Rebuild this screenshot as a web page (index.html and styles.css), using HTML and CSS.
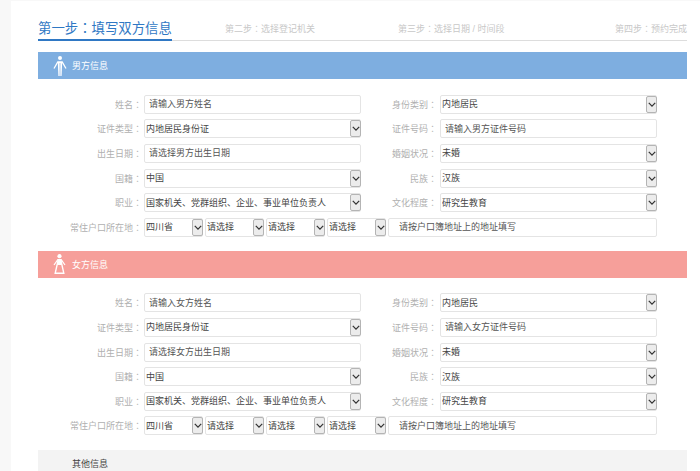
FILE: index.html
```html
<!DOCTYPE html>
<html>
<head>
    <meta charset="UTF-8">
    <title>填写双方信息</title>
    <link rel="stylesheet" href="styles.css">
</head>
<body>

<div class="panel">
    <div class="steps">
        <div class="step step-active">第一步<span class="colon">：</span>填写双方信息</div>
        <div class="step step-two">第二步<span class="colon">：</span>选择登记机关</div>
        <div class="step step-three">第三步<span class="colon">：</span>选择日期 / 时间段</div>
        <div class="step step-four">第四步<span class="colon">：</span>预约完成</div>
    </div>

    <div class="section-bar bar-male">
        <svg class="bar-icon" viewBox="0 0 14 20" width="14" height="20">
            <circle cx="7" cy="2" r="2" fill="#fff"/>
            <path d="M1 12.5 L4.8 6 H9.2 L13 12.5" fill="none" stroke="#fff" stroke-width="1.3"/>
            <path d="M4.8 6 L5.4 20 H8.6 L9.2 6 Z" fill="#fff"/>
            <path d="M7 7 V20" stroke="#7eaee0" stroke-width="0.7"/>
        </svg>
        <span>男方信息</span>
    </div>

    <div class="form">
        <div class="row">
            <label>姓名<span class="colon">：</span></label>
            <input class="field" type="text" placeholder="请输入男方姓名">
            <label>身份类别<span class="colon">：</span></label>
            <div class="pick"><select><option>内地居民</option></select><i class="arrow"><svg viewBox="0 0 10 6" width="8" height="5"><path d="M1 1 L5 5 L9 1" fill="none" stroke="#333" stroke-width="1.6"/></svg></i></div>
        </div>
        <div class="row">
            <label>证件类型<span class="colon">：</span></label>
            <div class="pick"><select><option>内地居民身份证</option></select><i class="arrow"><svg viewBox="0 0 10 6" width="8" height="5"><path d="M1 1 L5 5 L9 1" fill="none" stroke="#333" stroke-width="1.6"/></svg></i></div>
            <label>证件号码<span class="colon">：</span></label>
            <input class="field" type="text" placeholder="请输入男方证件号码">
        </div>
        <div class="row">
            <label>出生日期<span class="colon">：</span></label>
            <input class="field" type="text" placeholder="请选择男方出生日期">
            <label>婚姻状况<span class="colon">：</span></label>
            <div class="pick"><select><option>未婚</option></select><i class="arrow"><svg viewBox="0 0 10 6" width="8" height="5"><path d="M1 1 L5 5 L9 1" fill="none" stroke="#333" stroke-width="1.6"/></svg></i></div>
        </div>
        <div class="row">
            <label>国籍<span class="colon">：</span></label>
            <div class="pick"><select><option>中国</option></select><i class="arrow"><svg viewBox="0 0 10 6" width="8" height="5"><path d="M1 1 L5 5 L9 1" fill="none" stroke="#333" stroke-width="1.6"/></svg></i></div>
            <label>民族<span class="colon">：</span></label>
            <div class="pick"><select><option>汉族</option></select><i class="arrow"><svg viewBox="0 0 10 6" width="8" height="5"><path d="M1 1 L5 5 L9 1" fill="none" stroke="#333" stroke-width="1.6"/></svg></i></div>
        </div>
        <div class="row">
            <label>职业<span class="colon">：</span></label>
            <div class="pick"><select><option>国家机关、党群组织、企业、事业单位负责人</option></select><i class="arrow"><svg viewBox="0 0 10 6" width="8" height="5"><path d="M1 1 L5 5 L9 1" fill="none" stroke="#333" stroke-width="1.6"/></svg></i></div>
            <label>文化程度<span class="colon">：</span></label>
            <div class="pick"><select><option>研究生教育</option></select><i class="arrow"><svg viewBox="0 0 10 6" width="8" height="5"><path d="M1 1 L5 5 L9 1" fill="none" stroke="#333" stroke-width="1.6"/></svg></i></div>
        </div>
        <div class="row row-address">
            <label>常住户口所在地<span class="colon">：</span></label>
            <div class="address">
                <div class="pick"><select><option>四川省</option></select><i class="arrow"><svg viewBox="0 0 10 6" width="8" height="5"><path d="M1 1 L5 5 L9 1" fill="none" stroke="#333" stroke-width="1.6"/></svg></i></div>
                <div class="pick"><select><option>请选择</option></select><i class="arrow"><svg viewBox="0 0 10 6" width="8" height="5"><path d="M1 1 L5 5 L9 1" fill="none" stroke="#333" stroke-width="1.6"/></svg></i></div>
                <div class="pick"><select><option>请选择</option></select><i class="arrow"><svg viewBox="0 0 10 6" width="8" height="5"><path d="M1 1 L5 5 L9 1" fill="none" stroke="#333" stroke-width="1.6"/></svg></i></div>
                <div class="pick"><select><option>请选择</option></select><i class="arrow"><svg viewBox="0 0 10 6" width="8" height="5"><path d="M1 1 L5 5 L9 1" fill="none" stroke="#333" stroke-width="1.6"/></svg></i></div>
                <input class="field field-address" type="text" placeholder="请按户口簿地址上的地址填写">
            </div>
        </div>
    </div>

    <div class="section-bar bar-female">
        <svg class="bar-icon" viewBox="0 0 14 20" width="14" height="20">
            <circle cx="6.5" cy="2.2" r="2.1" fill="#fff"/>
            <path d="M1 11 L4.8 5.6 H8.2 L12 11" fill="none" stroke="#fff" stroke-width="1.2"/>
            <path d="M5.2 6 L2.2 19.2 H10.8 L7.8 6" fill="none" stroke="#fff" stroke-width="1.4"/>
            <path d="M4.8 6 H8.2 L8.6 11 H4.4 Z" fill="#fff"/>
        </svg>
        <span>女方信息</span>
    </div>

    <div class="form">
        <div class="row">
            <label>姓名<span class="colon">：</span></label>
            <input class="field" type="text" placeholder="请输入女方姓名">
            <label>身份类别<span class="colon">：</span></label>
            <div class="pick"><select><option>内地居民</option></select><i class="arrow"><svg viewBox="0 0 10 6" width="8" height="5"><path d="M1 1 L5 5 L9 1" fill="none" stroke="#333" stroke-width="1.6"/></svg></i></div>
        </div>
        <div class="row">
            <label>证件类型<span class="colon">：</span></label>
            <div class="pick"><select><option>内地居民身份证</option></select><i class="arrow"><svg viewBox="0 0 10 6" width="8" height="5"><path d="M1 1 L5 5 L9 1" fill="none" stroke="#333" stroke-width="1.6"/></svg></i></div>
            <label>证件号码<span class="colon">：</span></label>
            <input class="field" type="text" placeholder="请输入女方证件号码">
        </div>
        <div class="row">
            <label>出生日期<span class="colon">：</span></label>
            <input class="field" type="text" placeholder="请选择女方出生日期">
            <label>婚姻状况<span class="colon">：</span></label>
            <div class="pick"><select><option>未婚</option></select><i class="arrow"><svg viewBox="0 0 10 6" width="8" height="5"><path d="M1 1 L5 5 L9 1" fill="none" stroke="#333" stroke-width="1.6"/></svg></i></div>
        </div>
        <div class="row">
            <label>国籍<span class="colon">：</span></label>
            <div class="pick"><select><option>中国</option></select><i class="arrow"><svg viewBox="0 0 10 6" width="8" height="5"><path d="M1 1 L5 5 L9 1" fill="none" stroke="#333" stroke-width="1.6"/></svg></i></div>
            <label>民族<span class="colon">：</span></label>
            <div class="pick"><select><option>汉族</option></select><i class="arrow"><svg viewBox="0 0 10 6" width="8" height="5"><path d="M1 1 L5 5 L9 1" fill="none" stroke="#333" stroke-width="1.6"/></svg></i></div>
        </div>
        <div class="row">
            <label>职业<span class="colon">：</span></label>
            <div class="pick"><select><option>国家机关、党群组织、企业、事业单位负责人</option></select><i class="arrow"><svg viewBox="0 0 10 6" width="8" height="5"><path d="M1 1 L5 5 L9 1" fill="none" stroke="#333" stroke-width="1.6"/></svg></i></div>
            <label>文化程度<span class="colon">：</span></label>
            <div class="pick"><select><option>研究生教育</option></select><i class="arrow"><svg viewBox="0 0 10 6" width="8" height="5"><path d="M1 1 L5 5 L9 1" fill="none" stroke="#333" stroke-width="1.6"/></svg></i></div>
        </div>
        <div class="row row-address">
            <label>常住户口所在地<span class="colon">：</span></label>
            <div class="address">
                <div class="pick"><select><option>四川省</option></select><i class="arrow"><svg viewBox="0 0 10 6" width="8" height="5"><path d="M1 1 L5 5 L9 1" fill="none" stroke="#333" stroke-width="1.6"/></svg></i></div>
                <div class="pick"><select><option>请选择</option></select><i class="arrow"><svg viewBox="0 0 10 6" width="8" height="5"><path d="M1 1 L5 5 L9 1" fill="none" stroke="#333" stroke-width="1.6"/></svg></i></div>
                <div class="pick"><select><option>请选择</option></select><i class="arrow"><svg viewBox="0 0 10 6" width="8" height="5"><path d="M1 1 L5 5 L9 1" fill="none" stroke="#333" stroke-width="1.6"/></svg></i></div>
                <div class="pick"><select><option>请选择</option></select><i class="arrow"><svg viewBox="0 0 10 6" width="8" height="5"><path d="M1 1 L5 5 L9 1" fill="none" stroke="#333" stroke-width="1.6"/></svg></i></div>
                <input class="field field-address" type="text" placeholder="请按户口簿地址上的地址填写">
            </div>
        </div>
    </div>

    <div class="section-bar bar-other">
        <span>其他信息</span>
    </div>
</div>

</body>
</html>
```
FILE: styles.css
```css
html, body {
    height: 100%;
    overflow: hidden;
}

body {
    margin: 0;
    background-color: #f8f8f8;
    font-family: "Liberation Sans", "Noto Sans CJK SC", sans-serif;
    font-size: 9px;
    color: #444;
}

/* TC draws the full-width colon centred, as in the original */
.colon {
    font-family: "Noto Sans CJK TC", sans-serif;
}

.panel {
    margin: 1px 0 0 11px;
    padding: 0 13px 0 27px;
    height: 470px;
    background-color: white;
    overflow: hidden;
}

.steps {
    display: flex;
    align-items: flex-end;
    height: 39px;
    border-bottom: 1px solid #ddd;
}

.step {
    color: #c8c8c8;
    font-size: 9px;
    line-height: 12px;
    padding-bottom: 5px;
    white-space: nowrap;
}

.step-active {
    color: #2f78c4;
    font-size: 13.4px;
    line-height: 18px;
    padding-bottom: 1px;
    border-bottom: 2px solid #2f78c4;
    margin-bottom: -1px;
}

.step-two {
    margin-left: 53px;
}

.step-three {
    margin-left: 83px;
}

.step-four {
    margin-left: auto;
}

.section-bar {
    display: flex;
    align-items: center;
    height: 27px;
    padding-left: 15px;
    color: white;
}

.bar-male {
    margin-top: 11px;
    background-color: #7eaee0;
}

.bar-female {
    margin-top: 13.5px;
    background-color: #f69f9a;
}

.bar-other {
    margin-top: 14.5px;
    padding-left: 34px;
    height: 40px;
    align-items: flex-start;
    line-height: 28px;
    background-color: #f3f3f3;
    color: #444;
}

.bar-icon {
    margin-right: 5px;
}

.form {
    padding-top: 15.5px;
    display: flex;
    flex-direction: column;
    gap: 5px;
}

.row {
    display: grid;
    grid-template-columns: 104px 219px 76px 220px;
    height: 19.6px;
    align-items: center;
}

.row label {
    text-align: right;
    color: #b0b0b0;
    white-space: nowrap;
}

.row > .pick,
.row > .field {
    margin-left: 2px;
    width: 217px;
}

.row > .pick:last-child,
.row > .field:last-child {
    margin-left: 3px;
}

.row-address {
    grid-template-columns: 104px 1fr;
}

.address {
    display: flex;
    gap: 2px;
    margin-left: 2px;
    width: 513px;
}

.pick {
    position: relative;
    height: 19px;
}

.address .pick {
    flex: 0 0 59px;
}

.pick select {
    display: block;
    width: 100%;
    height: 19px;
    padding: 0 0 0 1px;
    border: 1px solid #e4e4e4;
    border-radius: 2px;
    background-color: white;
    font: inherit;
    color: #444;
    appearance: none;
    -webkit-appearance: none;
    outline: none;
}

.arrow {
    position: absolute;
    top: 1px;
    right: 0;
    width: 11px;
    height: 17px;
    display: flex;
    align-items: center;
    justify-content: center;
    background-color: #ececec;
    border: 1px solid #b4b4b4;
    border-radius: 2px;
    box-sizing: border-box;
}

.field {
    box-sizing: border-box;
    width: 217px;
    height: 19px;
    padding: 0 4px;
    border: 1px solid #e4e4e4;
    border-radius: 2px;
    font: inherit;
    outline: none;
}

.field::placeholder {
    color: #555;
    opacity: 1;
}

.field-address {
    flex: 1;
    padding-left: 10px;
}
```
